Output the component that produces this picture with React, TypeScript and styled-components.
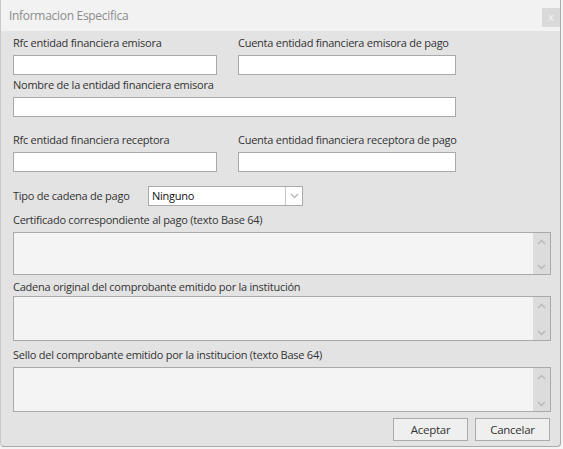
import styled, { createGlobalStyle } from "styled-components";

const GlobalStyle = createGlobalStyle`
  html, body {
    margin: 0;
    padding: 0;
    background: #f4f4f4;
  }
  * {
    box-sizing: border-box;
  }
`;

const Chevron = ({ up }: { up?: boolean }) => (
  <svg width="9" height="6" viewBox="0 0 9 6">
    <path
      d={up ? "M1 5 L4.5 1.5 L8 5" : "M1 1 L4.5 4.5 L8 1"}
      fill="none"
      stroke="#b8b8b8"
      strokeWidth="1.4"
    />
  </svg>
);

const TextArea = ({ height }: { height: number }) => (
  <AreaBox style={{ height }}>
    <AreaInput />
    <ScrollBar>
      <Chevron up />
      <Chevron />
    </ScrollBar>
  </AreaBox>
);

export default function App() {
  return (
    <>
      <GlobalStyle />
      <Window>
        <TitleBar>
          <Title>Informacion Especifica</Title>
          <CloseButton>x</CloseButton>
        </TitleBar>

        <Body>
          <Row $top={4}>
            <Field $width={204}>
              <Label>Rfc entidad financiera emisora</Label>
              <Input />
            </Field>
            <Field $width={218}>
              <Label>Cuenta entidad financiera emisora de pago</Label>
              <Input />
            </Field>
          </Row>

          <Row $top={2}>
            <Field $width={443}>
              <Label>Nombre de la entidad financiera emisora</Label>
              <Input />
            </Field>
          </Row>

          <Row $top={15}>
            <Field $width={204}>
              <Label>Rfc entidad financiera receptora</Label>
              <Input />
            </Field>
            <Field $width={218}>
              <Label>Cuenta entidad financiera receptora de pago</Label>
              <Input />
            </Field>
          </Row>

          <SelectRow>
            <InlineLabel>Tipo de cadena de pago</InlineLabel>
            <Select>
              <SelectValue>Ninguno</SelectValue>
              <SelectArrow>
                <Chevron />
              </SelectArrow>
            </Select>
          </SelectRow>

          <Block $top={6} $gap={4}>
            <Label>Certificado correspondiente al pago (texto Base 64)</Label>
            <TextArea height={43} />
          </Block>

          <Block $top={4} $gap={1}>
            <Label>Cadena original del comprobante emitido por la institución</Label>
            <TextArea height={45} />
          </Block>

          <Block $top={6} $gap={4}>
            <Label>
              Sello del comprobante emitido por la institucion (texto Base 64)
            </Label>
            <TextArea height={45} />
          </Block>

          <Footer>
            <Button>Aceptar</Button>
            <Button>Cancelar</Button>
          </Footer>
        </Body>
      </Window>
    </>
  );
}

const Window = styled.div`
  width: 561px;
  height: 447px;
  background: #e3e3e3;
  border-right: 1px solid #a9a9a9;
  border-bottom: 1px solid #a9a9a9;
  border-left: 1px solid #c8c8c8;
  border-radius: 0 0 4px 4px;
  font-family: "Open Sans", "Noto Sans", sans-serif;
  color: #333333;
  display: flex;
  flex-direction: column;
`;

const TitleBar = styled.div`
  height: 31px;
  background: #f2f2f2;
  display: flex;
  align-items: flex-start;
  justify-content: space-between;
  padding-left: 8px;
`;

const Title = styled.span`
  font-size: 12px;
  letter-spacing: -0.3px;
  line-height: 31px;
  color: #8c8c8c;
`;

const CloseButton = styled.div`
  margin-top: 8px;
  width: 18px;
  height: 19px;
  background: #d9d9d9;
  color: #f4f4f4;
  font-size: 11px;
  line-height: 18px;
  text-align: center;
`;

const Body = styled.div`
  padding: 0 9px 0 12px;
  display: flex;
  flex-direction: column;
`;

const Row = styled.div<{ $top: number }>`
  display: flex;
  gap: 21px;
  margin-top: ${(p) => p.$top}px;
`;

const Field = styled.div<{ $width: number }>`
  width: ${(p) => p.$width}px;
  display: flex;
  flex-direction: column;
  gap: 4px;
`;

const Label = styled.div`
  font-size: 11px;
  letter-spacing: -0.25px;
  line-height: 16px;
  height: 16px;
  white-space: nowrap;
  color: #333333;
`;

const Input = styled.div`
  height: 20px;
  background: #ffffff;
  border: 1px solid #a9a9a9;
`;

const SelectRow = styled.div`
  display: flex;
  align-items: center;
  margin-top: 14px;
  height: 20px;
`;

const InlineLabel = styled(Label)`
  width: 135px;
`;

const Select = styled.div`
  width: 155px;
  height: 20px;
  background: #ffffff;
  border: 1px solid #a9a9a9;
  display: flex;
`;

const SelectValue = styled.div`
  flex: 1;
  padding-left: 3px;
  font-size: 11px;
  letter-spacing: -0.25px;
  line-height: 18px;
  color: #111111;
`;

const SelectArrow = styled.div`
  width: 17px;
  border-left: 1px solid #c4c4c4;
  display: flex;
  align-items: center;
  justify-content: center;
`;

const Block = styled.div<{ $top: number; $gap: number }>`
  margin-top: ${(p) => p.$top}px;
  display: flex;
  flex-direction: column;
  gap: ${(p) => p.$gap}px;
`;

const AreaBox = styled.div`
  width: 538px;
  background: #f4f4f4;
  border: 1px solid #a9a9a9;
  display: flex;
`;

const AreaInput = styled.div`
  flex: 1;
`;

const ScrollBar = styled.div`
  width: 17px;
  background: #dcdcdc;
  display: flex;
  flex-direction: column;
  align-items: center;
  justify-content: space-between;
  padding: 6px 0 4px;
`;

const Footer = styled.div`
  margin-top: 6px;
  display: flex;
  justify-content: flex-end;
  gap: 7px;
  padding-right: 1px;
`;

const Button = styled.div`
  width: 75px;
  height: 23px;
  background: #efefef;
  border: 1px solid #ababab;
  font-size: 11.5px;
  letter-spacing: -0.25px;
  line-height: 21px;
  text-align: center;
  color: #333333;
`;
